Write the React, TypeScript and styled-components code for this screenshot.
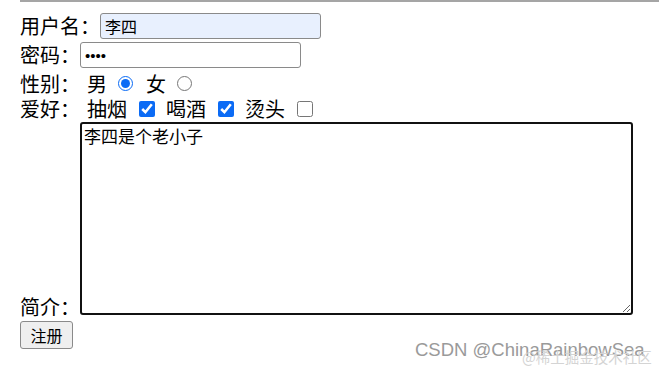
import { useEffect, useRef } from 'react';
import styled, { createGlobalStyle } from 'styled-components';

const GlobalStyle = createGlobalStyle`
  html, body {
    margin: 0;
    padding: 0;
    background: #fff;
  }
  body {
    font-family: 'Noto Sans CJK SC', 'Noto Sans', sans-serif;
    color: #000;
  }
`;

const Page = styled.div`
  position: relative;
  width: 659px;
  height: 366px;
  overflow: hidden;
`;

const Rule = styled.div`
  height: 2px;
  margin-left: 20px;
  background: #a5a5a5;
`;

const Form = styled.form`
  display: flex;
  flex-direction: column;
  padding-left: 20px;
  margin-top: 10px;
`;

const Row = styled.div<{ h: number; top?: number; bottom?: boolean }>`
  display: flex;
  align-items: ${props => (props.bottom ? 'flex-end' : 'center')};
  height: ${props => props.h}px;
  margin-top: ${props => props.top || 0}px;
`;

const Label = styled.span`
  font-size: 20px;
  line-height: 22px;
  white-space: nowrap;
`;

const Option = styled.span<{ gap?: number }>`
  font-size: 20px;
  line-height: 22px;
  margin-left: ${props => props.gap || 0}px;
`;

const TextInput = styled.input`
  box-sizing: border-box;
  width: 221px;
  height: 26px;
  margin: 0;
  padding: 1px 4px;
  font-family: 'Noto Sans CJK SC', sans-serif;
  font-size: 16px;
  background: #e8f0fe;
  border: 1px solid #8a8a8a;
  border-radius: 3px;
  outline: none;
`;

const Password = styled(TextInput)`
  font-family: 'Liberation Sans', Arial, sans-serif;
  font-size: 15px;
  background: #fff;
`;

const Radio = styled.input`
  width: 15px;
  height: 15px;
  margin: 0 13px 0 11px;
  accent-color: #0b6bf5;
`;

const Check = styled.input`
  width: 16px;
  height: 16px;
  margin: 0 11px 0 12px;
  accent-color: #0b6bf5;
`;

const Intro = styled(Label)`
  margin-bottom: -3px;
`;

const TextArea = styled.textarea`
  box-sizing: border-box;
  width: 553px;
  height: 193px;
  margin: 0;
  padding: 1px 2px;
  font-family: 'Noto Sans CJK SC', sans-serif;
  font-size: 17px;
  line-height: 22px;
  color: #000;
  caret-color: #000;
  border: 2px solid #111;
  border-radius: 3px;
  outline: none;
  resize: both;
`;

const Button = styled.button`
  box-sizing: border-box;
  width: 53px;
  height: 28px;
  padding: 0;
  font-family: 'Noto Sans CJK SC', sans-serif;
  font-size: 16px;
  color: #000;
  background: #efefef;
  border: 1px solid #8a8a8a;
  border-radius: 3px;
`;

const Watermark = styled.div`
  position: absolute;
  left: 415px;
  top: 339px;
  font-family: 'Liberation Sans', Arial, sans-serif;
  font-size: 18.5px;
  color: #9a9a9a;
  white-space: nowrap;
`;

const WatermarkSub = styled.div`
  position: absolute;
  left: 522px;
  top: 346px;
  font-family: 'Noto Sans CJK SC', sans-serif;
  font-size: 14.5px;
  color: #d4d4d4;
  white-space: nowrap;
`;

const intro = '李四是个老小子';

const App = () => {
  const areaRef = useRef<HTMLTextAreaElement>(null);

  useEffect(() => {
    const el = areaRef.current;
    if (el) {
      el.focus();
      el.setSelectionRange(intro.length, intro.length);
    }
  }, []);

  return (
    <Page>
      <GlobalStyle />
      <Rule />
      <Form onSubmit={e => e.preventDefault()}>
        <Row h={28}>
          <Label>用户名：</Label>
          <TextInput type="text" defaultValue="李四" />
        </Row>
        <Row h={30}>
          <Label>密码：</Label>
          <Password type="password" defaultValue="1234" />
        </Row>
        <Row h={27}>
          <Label>性别：</Label>
          <Option gap={7}>男</Option>
          <Radio type="radio" name="sex" defaultChecked />
          <Option>女</Option>
          <Radio type="radio" name="sex" />
        </Row>
        <Row h={24}>
          <Label>爱好：</Label>
          <Option gap={7}>抽烟</Option>
          <Check type="checkbox" defaultChecked />
          <Option>喝酒</Option>
          <Check type="checkbox" defaultChecked />
          <Option>烫头</Option>
          <Check type="checkbox" />
        </Row>
        <Row h={193} top={1} bottom>
          <Intro>简介：</Intro>
          <TextArea ref={areaRef} defaultValue={intro} />
        </Row>
        <Row h={28} top={6}>
          <Button type="submit">注册</Button>
        </Row>
      </Form>
      <Watermark>CSDN @ChinaRainbowSea</Watermark>
      <WatermarkSub>@稀土掘金技术社区</WatermarkSub>
    </Page>
  );
};

export default App;
